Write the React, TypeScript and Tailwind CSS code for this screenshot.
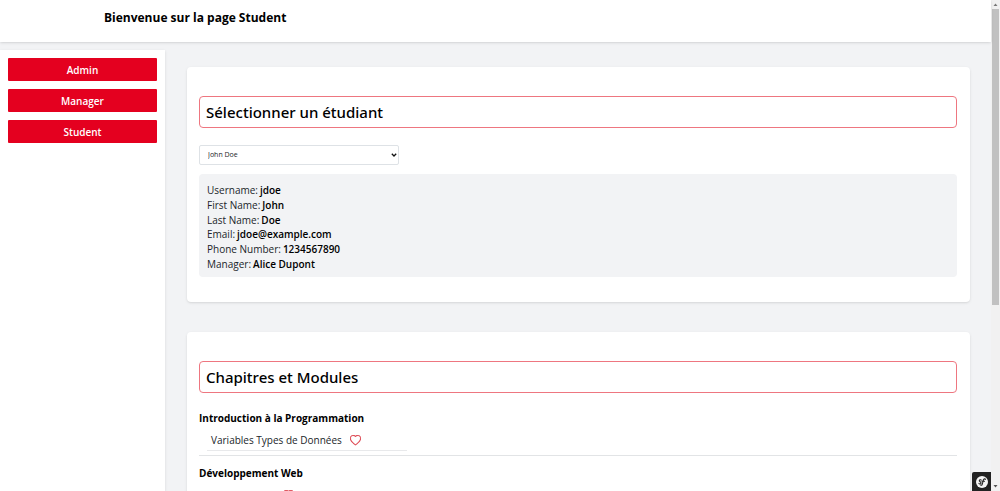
import type { ReactNode } from "react";

const links = ["Admin", "Manager", "Student"];

const details = [
  ["Username", "jdoe"],
  ["First Name", "John"],
  ["Last Name", "Doe"],
  ["Email", "jdoe@example.com"],
  ["Phone Number", "1234567890"],
  ["Manager", "Alice Dupont"],
];

const chapters = [
  { title: "Introduction à la Programmation", modules: "Variables Types de Données" },
  { title: "Développement Web", modules: "HTML5 et CSS" },
];

function Heart() {
  return (
    <svg viewBox="0 0 16 16" className="size-[11px]" fill="#d9303c" stroke="#d9303c" strokeWidth="0.4" aria-hidden="true">
      <path d="m8 2.748-.717-.737C5.6.281 2.514.878 1.4 3.053c-.523 1.023-.641 2.5.314 4.385.92 1.815 2.834 3.989 6.286 6.357 3.452-2.368 5.365-4.542 6.286-6.357.955-1.886.838-3.362.314-4.385C13.486.878 10.4.28 8.717 2.01zM8 15C-7.333 4.868 3.279-3.04 7.824 1.143q.09.083.176.171a3 3 0 0 1 .176-.17C12.72-3.042 23.333 4.867 8 15" />
    </svg>
  );
}

function Card({ title, children }: { title: string; children: ReactNode }) {
  return (
    <section className="shrink-0 rounded bg-white pt-[29px] pr-[13px] pb-[25px] pl-3 shadow">
      <h2 className="h-8 rounded border border-[#ee7680] px-1.5 font-['Noto_Sans','Open_Sans',sans-serif] text-[15px] leading-[31px] font-medium text-black">
        {title}
      </h2>
      {children}
    </section>
  );
}

function ScrollBar() {
  return (
    <div className="flex w-[9px] shrink-0 flex-col items-center bg-[#f1f1f1]" aria-hidden="true">
      <svg viewBox="0 0 9 9" className="size-[9px] shrink-0">
        <path d="M2.5 6 4.5 3.5 6.5 6z" fill="#777" />
      </svg>
      <div className="w-[7px] grow-[296] basis-0 bg-[#c1c1c1]" />
      <div className="grow-[177] basis-0" />
      <svg viewBox="0 0 9 9" className="size-[9px] shrink-0">
        <path d="M2.5 3 4.5 5.5 6.5 3z" fill="#505050" />
      </svg>
    </div>
  );
}

export default function App() {
  return (
    <div className="flex h-screen overflow-hidden bg-[#f2f3f5] font-['Open_Sans','Noto_Sans',sans-serif] text-[10px] text-[#212529]">
      <div className="relative flex min-w-0 grow flex-col">
        <header className="h-[42px] shrink-0 bg-white pl-[104px] shadow">
          <h1 className="text-xs leading-[35px] font-bold text-black">Bienvenue sur la page Student</h1>
        </header>
        <div className="flex min-h-0 grow">
          <nav className="mt-2 flex w-[165px] shrink-0 flex-col gap-2 bg-white p-2 shadow-sm">
            {links.map((link) => (
              <a
                key={link}
                href={"#" + link.toLowerCase()}
                className="block h-[23px] rounded-[1px] bg-[#e4001f] text-center leading-[25px] font-semibold text-white"
              >
                {link}
              </a>
            ))}
          </nav>
          <main className="flex min-w-0 grow flex-col gap-[30px] overflow-hidden pt-[25px] pr-[21px] pl-[22px]">
            <Card title="Sélectionner un étudiant">
              <div className="relative mt-[17px] w-[200px]">
                <select
                  aria-label="Étudiant"
                  className="block h-5 w-full appearance-none rounded-[2px] border border-[#dee2e6] bg-white px-2 text-[7px] text-[#212529]"
                >
                  <option>John Doe</option>
                </select>
                <svg viewBox="0 0 6 4" className="pointer-events-none absolute top-2 right-0.5 h-1 w-1.5" aria-hidden="true">
                  <path d="M.8.8 3 3 5.200.8" fill="none" stroke="#111" strokeWidth="1.300" />
                </svg>
              </div>
              <dl className="mt-[9px] grid h-[103px] auto-rows-fr rounded bg-[#f2f3f5] px-2 pt-[9px] pb-1.5">
                {details.map(([label, value]) => (
                  <div key={label} className="flex items-center gap-0.5 leading-[14px]">
                    <dt>{label}:</dt>
                    <dd className="font-semibold text-black">{value}</dd>
                  </div>
                ))}
              </dl>
            </Card>
            <Card title="Chapitres et Modules">
              <ul className="pt-4">
                {chapters.map(({ title, modules }) => (
                  <li key={title} className="mb-2 border-b border-[#e2e4e6] pb-1">
                    <h3 className="leading-[18px] font-bold text-black">{title}</h3>
                    <div className="ml-2 flex h-6 w-[200px] items-center gap-2 border-b border-[#e8e9eb] pt-1 pl-1">
                      <span>{modules}</span>
                      <button type="button" aria-label="Ajouter aux favoris">
                        <Heart />
                      </button>
                    </div>
                  </li>
                ))}
              </ul>
            </Card>
          </main>
        </div>
        <button
          type="button"
          aria-label="Symfony"
          className="absolute right-0 bottom-0 flex h-[19px] w-[19px] items-center justify-center rounded-tl-[2px] bg-[#222]"
        >
          <svg viewBox="0 0 24 24" className="size-3" aria-hidden="true">
            <circle cx="12" cy="12" r="12" fill="#f5f5f5" />
            <path
              d="M10.5 8.2C9.6 6.800 6.500 7.500 6.600 9.400c.1 2 3.800 2.300 3.500 4.700-.3 2.200-3.600 2.400-4.300.7M18.800 6.800c-.4-1.600-3-1.300-3.800.8-1 2.500-1.500 6.400-2.700 9.300-.7 1.600-2.100 2-2.800 1.200M12 10.500h5"
              fill="none"
              stroke="#222"
              strokeWidth="2.200"
              strokeLinecap="round"
            />
          </svg>
        </button>
      </div>
      <ScrollBar />
    </div>
  );
}
